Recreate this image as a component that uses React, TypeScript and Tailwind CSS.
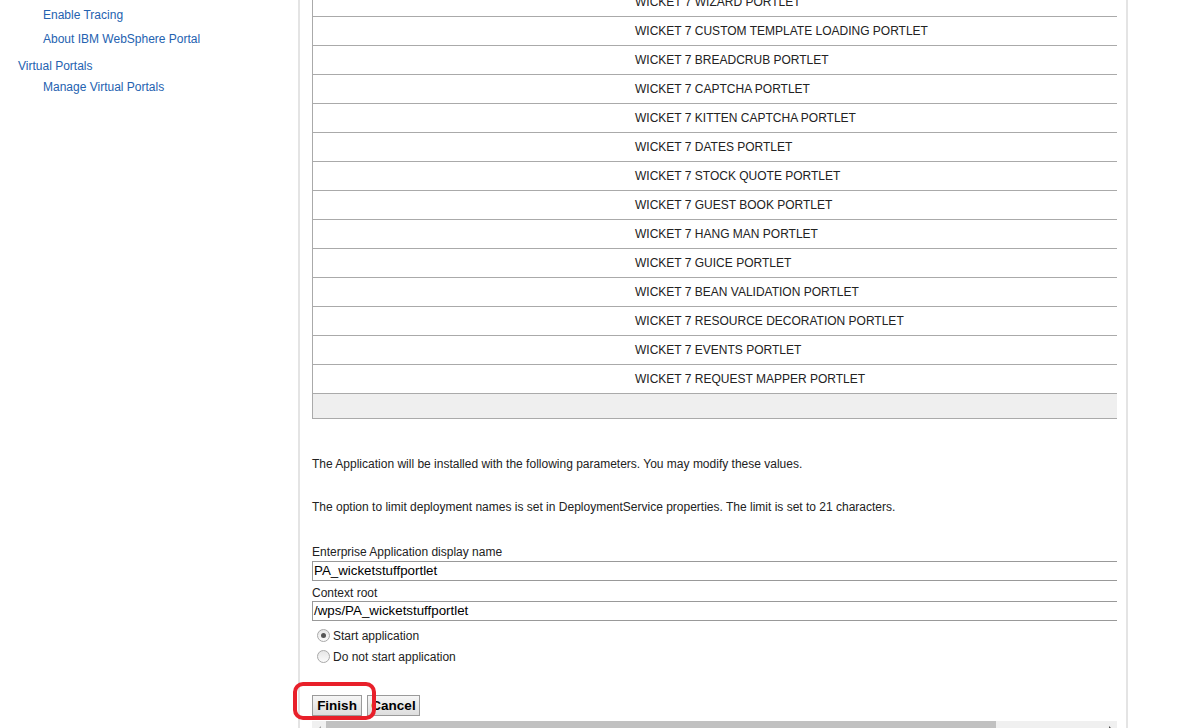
import React from "react";

const rows = [
  "WICKET 7 WIZARD PORTLET",
  "WICKET 7 CUSTOM TEMPLATE LOADING PORTLET",
  "WICKET 7 BREADCRUB PORTLET",
  "WICKET 7 CAPTCHA PORTLET",
  "WICKET 7 KITTEN CAPTCHA PORTLET",
  "WICKET 7 DATES PORTLET",
  "WICKET 7 STOCK QUOTE PORTLET",
  "WICKET 7 GUEST BOOK PORTLET",
  "WICKET 7 HANG MAN PORTLET",
  "WICKET 7 GUICE PORTLET",
  "WICKET 7 BEAN VALIDATION PORTLET",
  "WICKET 7 RESOURCE DECORATION PORTLET",
  "WICKET 7 EVENTS PORTLET",
  "WICKET 7 REQUEST MAPPER PORTLET",
];

function Radio({ checked }: { checked?: boolean }) {
  return (
    <span className="relative flex h-[13px] w-[13px] items-center justify-center rounded-full border border-[#a9a9a9] bg-gradient-to-b from-[#e6e6e6] to-[#fbfbfb]">
      {checked && <span className="h-[5px] w-[5px] rounded-full bg-[#555]" />}
    </span>
  );
}

export default function App() {
  return (
    <div className="flex h-[728px] w-[1198px] overflow-hidden bg-white font-['Liberation_Sans',Arial,sans-serif] text-[#222]">
      {/* Left navigation */}
      <div className="w-[298px] shrink-0 text-[12px] text-[#2462b0]">
        <div className="pl-[43px] pt-[7px] leading-[16px]">Enable Tracing</div>
        <div className="pl-[43px] pt-[8px] leading-[16px]">About IBM WebSphere Portal</div>
        <div className="pl-[18px] pt-[11px] leading-[16px]">Virtual Portals</div>
        <div className="pl-[43px] pt-[5px] leading-[16px]">Manage Virtual Portals</div>
      </div>

      {/* Main panel */}
      <div className="relative w-[830px] shrink-0 border-l-2 border-r-2 border-[#e4e4e4] pl-[12px] pr-[8px]">
        <div className="w-[805px]">
          {/* Table */}
          <div className="-mt-[12px] w-[805px] border-l border-[#aaa] text-[12px]">
            {rows.map((r) => (
              <div key={r} className="flex h-[29px] items-center border-b border-[#aaa] pl-[322px] leading-[14px]">
                {r}
              </div>
            ))}
            <div className="h-[25px] border-b border-[#aaa] bg-[#efefef]" />
          </div>

          <div className="mt-[37px] text-[12px] leading-[16px]">
            The Application will be installed with the following parameters. You may modify these values.
          </div>
          <div className="mt-[27px] text-[12px] leading-[16px]">
            The option to limit deployment names is set in DeploymentService properties. The limit is set to 21 characters.
          </div>

          <div className="mt-[29px] text-[12px] leading-[16px]">Enterprise Application display name</div>
          <div className="mt-[1px] flex h-[20px] w-[805px] items-center border border-r-0 border-[#999] pl-[1px] text-[13.33px] text-black">
            PA_wicketstuffportlet
          </div>
          <div className="mt-[4px] text-[12px] leading-[16px]">Context root</div>
          <div className="flex h-[20px] w-[805px] items-center border border-r-0 border-[#999] pl-[1px] text-[13.33px] text-black">
            /wps/PA_wicketstuffportlet
          </div>

          <div className="mt-[4px] flex h-[21px] items-center pl-[5px] text-[12px]">
            <Radio checked />
            <span className="ml-[3px]">Start application</span>
          </div>
          <div className="flex h-[21px] items-center pl-[5px] text-[12px]">
            <Radio />
            <span className="ml-[3px]">Do not start application</span>
          </div>

          <div className="relative mt-[28px] flex h-[21px] gap-[5px]">
            <button className="h-[21px] w-[50px] border border-[#9a9a9a] bg-gradient-to-b from-[#f6f6f6] to-[#dddddd] text-[13.5px] font-bold leading-none text-black">
              Finish
            </button>
            <button className="h-[21px] w-[53px] border border-[#9a9a9a] bg-gradient-to-b from-[#f6f6f6] to-[#dddddd] text-[13.5px] font-bold leading-none text-black">
              Cancel
            </button>
            <div className="pointer-events-none absolute -left-[19px] -top-[13px] h-[38px] w-[83px] rounded-[10px] border-[4px] border-[#e8202a]" />
          </div>

          {/* horizontal scrollbar */}
          <div className="mt-[5px] flex h-[17px] w-[805px] items-start bg-[#f0f0f0]">
            <div className="flex h-[17px] w-[14px] items-start justify-center pt-[5px]">
              <div className="h-0 w-0 border-y-[3px] border-r-[3px] border-y-transparent border-r-[#a3a3a3]" />
            </div>
            <div className="h-[17px] w-[670px] bg-[#c1c1c1]" />
            <div className="flex-1" />
            <div className="flex h-[17px] w-[14px] items-start justify-center pt-[5px]">
              <div className="h-0 w-0 border-y-[3px] border-l-[3px] border-y-transparent border-l-[#505050]" />
            </div>
          </div>
        </div>
      </div>

      <div className="flex-1" />
    </div>
  );
}
